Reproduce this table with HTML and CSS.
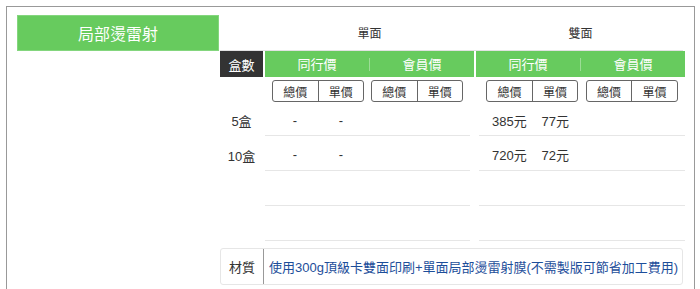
FILE: index.html
```html
<!DOCTYPE html>
<html lang="zh-Hant">
<head>
    <meta charset="UTF-8">
    <meta name="viewport" content="width=device-width, initial-scale=1.0">
    <title>局部燙雷射 價格表</title>
    <link rel="stylesheet" href="styles.css">
</head>
<body>
    <div class="panel">
        <div class="title">局部燙雷射</div>
        <div class="prices">
            <div class="row row-head">
                <div></div>
                <div class="side-name">單面</div>
                <div class="side-name">雙面</div>
            </div>
            <div class="row row-bar">
                <div class="qty-head">盒數</div>
                <div class="bar"><span>同行價</span><span>會員價</span></div>
                <div class="bar"><span>同行價</span><span>會員價</span></div>
            </div>
            <div class="row row-tabs">
                <div></div>
                <div class="cell cell-l">
                    <div class="pair tabs"><span>總價</span><span>單價</span></div>
                    <div class="pair tabs"><span>總價</span><span>單價</span></div>
                </div>
                <div class="cell cell-r">
                    <div class="pair tabs"><span>總價</span><span>單價</span></div>
                    <div class="pair tabs"><span>總價</span><span>單價</span></div>
                </div>
            </div>
            <div class="row row-data first">
                <div class="qty">5盒</div>
                <div class="cell cell-l">
                    <div class="pair"><span>-</span><span>-</span></div>
                    <div class="pair"><span></span><span></span></div>
                </div>
                <div class="cell cell-r">
                    <div class="pair"><span>385元</span><span>77元</span></div>
                    <div class="pair"><span></span><span></span></div>
                </div>
            </div>
            <div class="row row-data">
                <div class="qty">10盒</div>
                <div class="cell cell-l">
                    <div class="pair"><span>-</span><span>-</span></div>
                    <div class="pair"><span></span><span></span></div>
                </div>
                <div class="cell cell-r">
                    <div class="pair"><span>720元</span><span>72元</span></div>
                    <div class="pair"><span></span><span></span></div>
                </div>
            </div>
            <div class="row row-data">
                <div class="qty"></div>
                <div class="cell cell-l"></div>
                <div class="cell cell-r"></div>
            </div>
            <div class="row row-data">
                <div class="qty"></div>
                <div class="cell cell-l"></div>
                <div class="cell cell-r"></div>
            </div>
            <div class="material">
                <div class="material-label">材質</div>
                <div class="material-text">使用300g頂級卡雙面印刷+單面局部燙雷射膜(不需製版可節省加工費用)</div>
            </div>
        </div>
    </div>
</body>
</html>
```

FILE: styles.css
```css
html, body {
    overflow: hidden;
}

body {
    margin: 0;
    font-family: "Liberation Sans", "Noto Sans CJK TC", sans-serif;
    color: #333;
    background: #fff;
}

.panel {
    display: flex;
    align-items: flex-start;
    margin: 6px 0 0 6px;
    width: 689px;
    padding: 8px 11px 10px 10px;
    box-sizing: border-box;
    border: 1px solid #999;
    border-bottom: none;
}

.title {
    width: 202px;
    height: 36px;
    box-sizing: border-box;
    border: 1px solid #84d67e;
    background-color: #67cb5e;
    color: #fff;
    font-size: 16px;
    display: flex;
    align-items: center;
    justify-content: center;
}

.prices {
    margin-left: 1px;
    width: 463px;
}

.row {
    display: grid;
    grid-template-columns: 43px 209px 209px;
    column-gap: 2px;
}

.row-head {
    height: 36px;
    box-sizing: border-box;
    border-bottom: 1px solid #e2e2e2;
}

.side-name {
    display: flex;
    align-items: center;
    justify-content: center;
    font-size: 12px;
}

.row-bar {
    height: 26px;
    font-size: 13px;
}

.qty-head {
    background-color: #333;
    color: #fff;
    display: flex;
    align-items: center;
    justify-content: center;
}

.bar {
    background-color: #67cb5e;
    color: #fff;
    display: flex;
    align-items: center;
}

.bar span {
    flex: 1;
    text-align: center;
    line-height: 13px;
}

.bar span + span {
    border-left: 1px solid rgba(255, 255, 255, 0.35);
}

.cell {
    display: flex;
    align-items: center;
    justify-content: space-evenly;
}

.cell-l {
    margin-right: 4px;
}

.cell-r {
    margin-left: 3px;
}

.pair {
    display: flex;
    width: 92px;
}

.pair span {
    width: 46px;
    text-align: center;
}

.row-tabs {
    margin-top: 3px;
    height: 22px;
}

.tabs {
    height: 22px;
    box-sizing: border-box;
    border: 1px solid #666;
    border-radius: 3px;
    font-size: 12px;
}

.tabs span {
    display: flex;
    align-items: center;
    justify-content: center;
}

.tabs span + span {
    border-left: 1px solid #666;
}

.row-data {
    height: 35px;
    box-sizing: border-box;
    font-size: 13px;
}

.row-data.first {
    height: 34px;
}

.row-data .cell {
    border-bottom: 1px solid #e6e6e6;
    padding-top: 3px;
}

.qty {
    display: flex;
    align-items: center;
    justify-content: center;
    padding-top: 3px;
}

.material {
    display: flex;
    margin-top: 7px;
    height: 37px;
    box-sizing: border-box;
    border: 1px solid #e6e6e6;
    border-radius: 3px;
    font-size: 13px;
}

.material-label {
    width: 42px;
    border-right: 1px solid #999;
    display: flex;
    align-items: center;
    justify-content: center;
}

.material-text {
    display: flex;
    align-items: center;
    padding-left: 5px;
    color: #1d4e9a;
}
```
